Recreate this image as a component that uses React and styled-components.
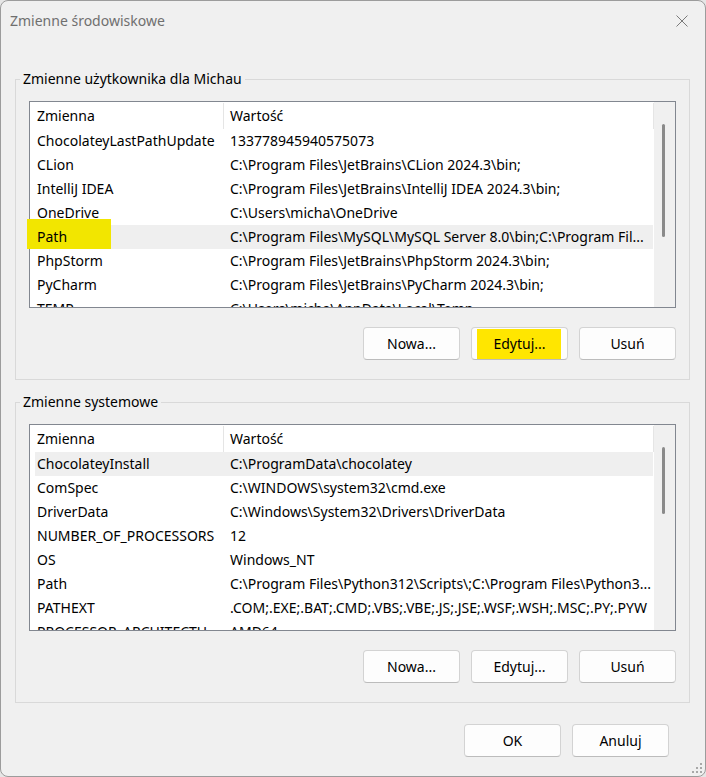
import React from 'react';
import styled, { createGlobalStyle } from 'styled-components';

const Global = createGlobalStyle`
  html, body { margin: 0; padding: 0; background: #e6e6e6; }
  * { box-sizing: border-box; }
`;

const FONT = `"Noto Sans", "Open Sans", "Liberation Sans", sans-serif`;

const Window = styled.div`
  position: relative;
  width: 706px;
  height: 777px;
  background: #f0f0f0;
  border: 1px solid #9c9c9c;
  border-radius: 8px;
  overflow: hidden;
  display: flex;
  flex-direction: column;
  font-family: ${FONT};
  font-size: 14px;
  color: #000;
`;

const TitleBar = styled.div`
  height: 39px;
  display: flex;
  align-items: center;
  justify-content: space-between;
  padding-left: 9px;
`;

const Title = styled.div`
  color: #6f6f6f;
  font-size: 14px;
`;

const CloseButton = styled.div`
  width: 46px;
  height: 39px;
  display: flex;
  align-items: center;
  justify-content: center;
`;

const Content = styled.div`
  padding: 29px 15px 0 14px;
  display: flex;
  flex-direction: column;
  gap: 12px;
`;

const Group = styled.fieldset`
  margin: 0;
  padding: 12px 13px 19px;
  border: 1px solid #d9d9d9;
  min-inline-size: 0;
`;

const Legend = styled.legend`
  padding: 0 3px;
  margin-left: -9px;
  line-height: 20px;
  font-size: 14px;
`;

const GroupBody = styled.div`
  display: flex;
  flex-direction: column;
  gap: 19px;
`;

const ListBox = styled.div`
  height: 207px;
  border: 1px solid #828790;
  background: #fff;
  display: flex;
`;

const ListMain = styled.div`
  flex: 1;
  min-width: 0;
  min-height: 0;
  display: flex;
  flex-direction: column;
`;

const Header = styled.div`
  height: 27px;
  flex: none;
  display: flex;
`;

const HeaderCell = styled.div`
  width: ${p => p.$w}px;
  margin-top: 1px;
  padding-left: ${p => p.$pl}px;
  border-right: 1px solid #e5e5e5;
  line-height: 26px;
  white-space: nowrap;
`;

const Body = styled.div`
  flex: 1;
  min-height: 0;
  overflow-y: clip;
  overflow-x: visible;
`;

const Row = styled.div`
  position: relative;
  height: 24px;
  margin: 0 1px 0 5px;
  display: flex;
  line-height: 24px;
  background: ${p => (p.$selected ? '#efefef' : 'transparent')};
`;

const Mark = styled.div`
  position: absolute;
  left: -8px;
  top: -6px;
  width: 84px;
  height: 30px;
  background: #f2e600;
`;

const NameCell = styled.div`
  position: relative;
  width: 188px;
  flex: none;
  padding: 0 4px 0 2px;
  white-space: nowrap;
  overflow: hidden;
  text-overflow: ellipsis;
`;

const ValueCell = styled.div`
  position: relative;
  flex: 1;
  min-width: 0;
  padding: 0 0 0 7px;
  white-space: nowrap;
  overflow: hidden;
  text-overflow: ellipsis;
`;

const ScrollTrack = styled.div`
  width: 21px;
  flex: none;
  background: #f0f0f0;
  padding: 22px 0 0 8px;
`;

const Thumb = styled.div`
  width: 3px;
  height: ${p => p.$h}px;
  border-radius: 2px;
  background: #8a8a8a;
`;

const ButtonRow = styled.div`
  display: flex;
  justify-content: flex-end;
  gap: 11px;
`;

const Button = styled.button`
  width: 97px;
  height: 33px;
  border: 1px solid #d3d3d3;
  border-bottom-color: #bcbcbc;
  border-radius: 4px;
  background: ${p =>
    p.$marked
      ? '#fdfdfd linear-gradient(#ffe600, #ffe600) no-repeat 5px 1px / 84px 31px'
      : '#fdfdfd'};
  font-family: ${FONT};
  font-size: 14px;
  color: #000;
  padding: 0;
`;

const Footer = styled.div`
  display: flex;
  justify-content: flex-end;
  gap: 11px;
  padding: 21px 36px 0 0;
`;

const Grip = styled.svg`
  position: absolute;
  right: 2px;
  bottom: 2px;
`;

const userVars = [
  ['ChocolateyLastPathUpdate', '133778945940575073'],
  ['CLion', 'C:\\Program Files\\JetBrains\\CLion 2024.3\\bin;'],
  ['IntelliJ IDEA', 'C:\\Program Files\\JetBrains\\IntelliJ IDEA 2024.3\\bin;'],
  ['OneDrive', 'C:\\Users\\micha\\OneDrive'],
  ['Path', 'C:\\Program Files\\MySQL\\MySQL Server 8.0\\bin;C:\\Program Fil...', true, true],
  ['PhpStorm', 'C:\\Program Files\\JetBrains\\PhpStorm 2024.3\\bin;'],
  ['PyCharm', 'C:\\Program Files\\JetBrains\\PyCharm 2024.3\\bin;'],
  ['TEMP', 'C:\\Users\\micha\\AppData\\Local\\Temp'],
];

const sysVars = [
  ['ChocolateyInstall', 'C:\\ProgramData\\chocolatey', true],
  ['ComSpec', 'C:\\WINDOWS\\system32\\cmd.exe'],
  ['DriverData', 'C:\\Windows\\System32\\Drivers\\DriverData'],
  ['NUMBER_OF_PROCESSORS', '12'],
  ['OS', 'Windows_NT'],
  ['Path', 'C:\\Program Files\\Python312\\Scripts\\;C:\\Program Files\\Python3...'],
  ['PATHEXT', '.COM;.EXE;.BAT;.CMD;.VBS;.VBE;.JS;.JSE;.WSF;.WSH;.MSC;.PY;.PYW'],
  ['PROCESSOR_ARCHITECTURE', 'AMD64'],
];

function VarList({ rows, thumb }) {
  return (
    <ListBox>
      <ListMain>
        <Header>
          <HeaderCell $w={194} $pl={7}>Zmienna</HeaderCell>
          <HeaderCell $w={430} $pl={6}>Wartość</HeaderCell>
        </Header>
        <Body>
          {rows.map(([name, value, selected, marked]) => (
            <Row key={name} $selected={selected}>
              {marked && <Mark />}
              <NameCell>{name}</NameCell>
              <ValueCell>{value}</ValueCell>
            </Row>
          ))}
        </Body>
      </ListMain>
      <ScrollTrack>
        <Thumb $h={thumb} />
      </ScrollTrack>
    </ListBox>
  );
}

function VarGroup({ title, rows, thumb, markEdit }) {
  return (
    <Group>
      <Legend>{title}</Legend>
      <GroupBody>
        <VarList rows={rows} thumb={thumb} />
        <ButtonRow>
          <Button>Nowa...</Button>
          <Button $marked={markEdit}>Edytuj...</Button>
          <Button>Usuń</Button>
        </ButtonRow>
      </GroupBody>
    </Group>
  );
}

export default function App() {
  return (
    <>
      <Global />
      <Window>
        <TitleBar>
          <Title>Zmienne środowiskowe</Title>
          <CloseButton>
            <svg width="12" height="12" viewBox="0 0 12 12">
              <path d="M0.5 0.5 L11.5 11.5 M11.5 0.5 L0.5 11.5" stroke="#7a7a7a" strokeWidth="1" fill="none" />
            </svg>
          </CloseButton>
        </TitleBar>
        <Content>
          <VarGroup title="Zmienne użytkownika dla Michau" rows={userVars} thumb={113} markEdit />
          <VarGroup title="Zmienne systemowe" rows={sysVars} thumb={67} />
        </Content>
        <Footer>
          <Button>OK</Button>
          <Button>Anuluj</Button>
        </Footer>
        <Grip width="12" height="12" viewBox="0 0 12 12">
          {[[10, 2], [10, 6], [6, 6], [10, 10], [6, 10], [2, 10]].map(([x, y]) => (
            <rect key={`${x}-${y}`} x={x - 1} y={y - 1} width="2" height="2" fill="#a8a8a8" />
          ))}
        </Grip>
      </Window>
    </>
  );
}
